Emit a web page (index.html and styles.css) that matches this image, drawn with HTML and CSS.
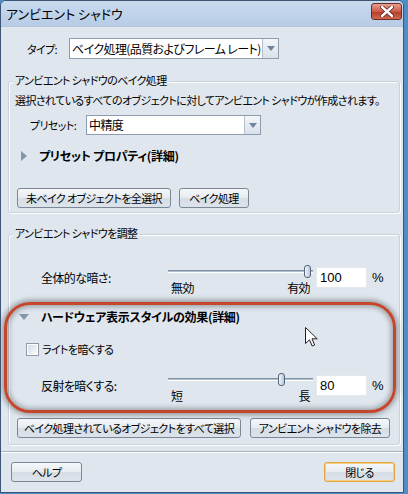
FILE: index.html
```html
<!DOCTYPE html>
<html lang="ja">
<head>
    <meta charset="UTF-8">
    <title>アンビエント シャドウ</title>
    <link rel="stylesheet" href="styles.css">
</head>
<body>
    <div class="window">
        <div class="titlebar">
            <span class="title">アンビエント シャドウ</span>
            <div class="close">
                <svg width="14" height="11" viewBox="0 0 14 11">
                    <path d="M2 1 L12 10 M12 1 L2 10" stroke="#5a2020" stroke-width="4" stroke-linecap="round"/>
                    <path d="M2 1 L12 10 M12 1 L2 10" stroke="#fff" stroke-width="2.4" stroke-linecap="round"/>
                </svg>
            </div>
        </div>

        <div class="content">
            <div class="type-row">
                <span class="type-label">タイプ:</span>
                <div class="select type-select">
                    <span class="select-text">ベイク処理(品質およびフレーム レート)</span>
                    <span class="select-btn"><i class="arrow"></i></span>
                </div>
            </div>

            <div class="group bake">
                <div class="group-title">アンビエント シャドウのベイク処理</div>
                <p class="desc">選択されているすべてのオブジェクトに対してアンビエント シャドウが作成されます。</p>
                <div class="preset-row">
                    <span class="preset-label">プリセット:</span>
                    <div class="select preset-select">
                        <span class="select-text">中精度</span>
                        <span class="select-btn"><i class="arrow"></i></span>
                    </div>
                </div>
                <div class="rollout">
                    <i class="tri-right"></i>
                    <span>プリセット プロパティ(詳細)</span>
                </div>
                <div class="btn-row">
                    <button class="btn">未ベイク オブジェクトを全選択</button>
                    <button class="btn">ベイク処理</button>
                </div>
            </div>

            <div class="group adjust">
                <div class="group-title">アンビエント シャドウを調整</div>
                <div class="slider-row first">
                    <span class="slider-label">全体的な暗さ:</span>
                    <div class="slider">
                        <div class="track-area">
                            <div class="track"></div>
                            <div class="thumb" style="left: 136px"></div>
                        </div>
                        <div class="scale"><span>無効</span><span>有効</span></div>
                    </div>
                    <div class="num">100</div>
                    <span class="pct">%</span>
                </div>

                <div class="hw">
                    <div class="rollout">
                        <i class="tri-down"></i>
                        <span>ハードウェア表示スタイルの効果(詳細)</span>
                    </div>
                    <label class="check-row">
                        <span class="checkbox"></span>
                        <span>ライトを暗くする</span>
                    </label>
                    <div class="slider-row second">
                        <span class="slider-label">反射を暗くする:</span>
                        <div class="slider">
                            <div class="track-area">
                                <div class="track"></div>
                                <div class="thumb" style="left: 110px"></div>
                            </div>
                            <div class="scale"><span>短</span><span>長</span></div>
                        </div>
                        <div class="num">80</div>
                        <span class="pct">%</span>
                    </div>
                    <svg class="cursor" width="13" height="21" viewBox="0 0 13 21">
                        <path d="M0.5 0.5 L0.5 16.5 L4.5 12.8 L7.2 19 L9.6 18 L7 11.8 L12.2 11.8 Z" fill="#fff" stroke="#222" stroke-width="1"/>
                    </svg>
                </div>

                <div class="btn-row bottom">
                    <button class="btn">ベイク処理されているオブジェクトをすべて選択</button>
                    <button class="btn">アンビエント シャドウを除去</button>
                </div>
            </div>

            <div class="separator"></div>

            <div class="footer">
                <button class="btn footer-btn">ヘルプ</button>
                <button class="btn footer-btn default">閉じる</button>
            </div>
        </div>
    </div>
</body>
</html>
```

FILE: styles.css
```css
html {
    background: #4e8dc6;
}

body {
    margin: 0;
    font-family: "Noto Sans CJK JP", "Noto Sans", sans-serif;
    font-size: 11px;
    line-height: 14px;
    letter-spacing: -0.6px;
    font-feature-settings: "palt";
    color: #000;
}

.window {
    width: 402px;
    height: 491px;
    border: 1px solid #3b5573;
    border-radius: 6px 6px 0 0;
    background: #dfe6ee;
    overflow: hidden;
}

.titlebar {
    height: 25px;
    background: linear-gradient(#c8daee, #b7cce5);
    border-bottom: 1px solid #b3c6dc;
    display: flex;
    align-items: center;
    justify-content: space-between;
    padding: 0 1px 0 5px;
}

.title {
    font-size: 13px;
    letter-spacing: 0;
    margin-top: 1px;
}

.close {
    width: 29px;
    height: 15px;
    margin-top: -4px;
    border: 1px solid #6b2b2b;
    border-radius: 3px;
    background: linear-gradient(#e7a08f, #cc5a45 50%, #b43a26 51%, #d06a50);
    display: flex;
    align-items: center;
    justify-content: center;
}

.content {
    padding: 0 3px 0 7px;
}

/* type row */
.type-row {
    display: flex;
    align-items: center;
    height: 21px;
    margin-top: 11px;
    padding-left: 19px;
}

.type-label {
    width: 42px;
}

.select {
    display: flex;
    height: 19px;
    background: #fff;
    border: 1px solid #8e9cad;
}

.type-select {
    width: 208px;
}

.preset-select {
    width: 173px;
    height: 18px;
}

.select-text {
    flex: 1;
    padding-left: 2px;
    font-size: 12px;
    line-height: 19px;
    white-space: nowrap;
    overflow: hidden;
}

.preset-select .select-text {
    line-height: 18px;
}

.select-btn {
    width: 15px;
    border-left: 1px solid #b4bfcb;
    background: linear-gradient(#f3f6f9, #d9e1ea);
    display: flex;
    align-items: center;
    justify-content: center;
}

.arrow {
    width: 0;
    height: 0;
    border-left: 4px solid transparent;
    border-right: 4px solid transparent;
    border-top: 5px solid #6f839a;
}

/* groups */
.group {
    border: 1px solid #c9d1da;
    border-radius: 3px;
    box-shadow: inset 1px 1px 0 #fff, 1px 1px 0 #fff;
    width: 390px;
}

.bake {
    margin-top: 22px;
    padding-bottom: 4px;
}

.adjust {
    margin-top: 21px;
    padding-bottom: 6px;
}

.group-title {
    height: 14px;
    margin: -9px 0 0 4px;
    padding: 0 2px;
    width: fit-content;
    background: #dfe6ee;
}

.desc {
    height: 14px;
    margin: 6px 0 0 6px;
    white-space: nowrap;
}

.preset-row {
    display: flex;
    align-items: center;
    height: 20px;
    margin-top: 8px;
    padding-left: 21px;
}

.preset-label {
    width: 56px;
}

.rollout {
    display: flex;
    align-items: center;
    height: 16px;
    margin-top: 13px;
    padding-left: 12px;
    font-size: 12px;
    letter-spacing: -0.3px;
    font-weight: bold;
}

.rollout span {
    margin-left: 12px;
}

.tri-right {
    width: 0;
    height: 0;
    border-top: 5px solid transparent;
    border-bottom: 5px solid transparent;
    border-left: 6px solid #8396ad;
}

.tri-down {
    width: 0;
    height: 0;
    margin-left: -2px;
    border-left: 5px solid transparent;
    border-right: 5px solid transparent;
    border-top: 6px solid #8396ad;
}

.btn-row {
    display: flex;
    gap: 8px;
    margin-top: 24px;
    padding-left: 8px;
}

.btn {
    font: inherit;
    letter-spacing: inherit;
    font-feature-settings: "palt";
    height: 20px;
    padding: 0 4px;
    border: 1px solid #7b8795;
    border-radius: 3px;
    background: linear-gradient(#f6f8fa, #e6ebf0 50%, #d6dde5 51%, #dde3ea);
    color: #000;
    white-space: nowrap;
}

.btn-row .btn:first-child {
    width: 154px;
}

.btn-row .btn:last-child {
    width: 70px;
}

.btn-row.bottom {
    margin-top: 15px;
    gap: 9px;
}

.btn-row.bottom .btn:first-child {
    width: 224px;
}

.btn-row.bottom .btn:last-child {
    width: 140px;
}

/* sliders */
.slider-row {
    display: flex;
    align-items: flex-start;
    height: 30px;
    padding-left: 32px;
}

.slider-row.first {
    margin-top: 25px;
}

.slider-row.second {
    margin-top: 16px;
}

.slider-label {
    width: 127px;
    margin-top: 6px;
    font-size: 12px;
}

.slider {
    width: 145px;
}

.track-area {
    position: relative;
    height: 13px;
}

.track {
    position: relative;
    top: 5px;
    height: 1px;
    background: #7f91a7;
    border-bottom: 1px solid #b2bfcd;
    box-shadow: 0 1px 0 #fff;
}

.thumb {
    position: absolute;
    top: 0;
    width: 5px;
    height: 11px;
    border: 1px solid #52657c;
    border-radius: 3px;
    background: linear-gradient(90deg, #f1f5f9, #b9c7d7);
}

.scale {
    display: flex;
    justify-content: space-between;
    height: 14px;
    margin-top: 3px;
    padding: 0 3px;
    font-size: 12px;
}

.num {
    width: 46px;
    height: 19px;
    margin: 2px 0 0 3px;
    padding-left: 3px;
    background: #fff;
    border: 1px solid #e5e9ee;
    font-family: "Liberation Sans", sans-serif;
    font-size: 13px;
    letter-spacing: 0;
    line-height: 19px;
}

.pct {
    margin: 6px 0 0 5px;
    font-family: "Liberation Sans", sans-serif;
    font-size: 13px;
    letter-spacing: 0;
}

/* hardware section with the red highlight */
.hw {
    position: relative;
    margin-top: 14px;
}

.hw::after {
    content: "";
    position: absolute;
    top: -7px;
    left: -5px;
    right: 3px;
    bottom: -10px;
    border: 3px solid #c4462d;
    border-radius: 26px;
    box-shadow: 0 0 5px 2px rgba(60, 60, 60, 0.45), inset 0 0 5px 2px rgba(60, 60, 60, 0.4);
    pointer-events: none;
}

.hw .rollout {
    margin-top: 0;
}

.check-row {
    display: flex;
    align-items: center;
    height: 16px;
    margin-top: 16px;
    padding-left: 17px;
}

.checkbox {
    width: 11px;
    height: 11px;
    margin-right: 3px;
    border: 1px solid #8f9aa6;
    background: linear-gradient(135deg, #d3d9e0, #fcfdfe);
    box-shadow: inset 0 0 0 1px #fff;
}

.cursor {
    position: absolute;
    left: 296px;
    top: 18px;
}

.separator {
    margin: 6px -3px 0 -7px;
    height: 1px;
    background: #a9b4c0;
    border-bottom: 1px solid #fff;
}

.footer {
    display: flex;
    justify-content: space-between;
    margin-top: 9px;
    padding: 0 5px 0 3px;
}

.footer-btn {
    width: 71px;
}

.footer-btn.default {
    border-color: #e3a33e;
    box-shadow: inset 0 0 0 1px #f7cf7e;
}
```
